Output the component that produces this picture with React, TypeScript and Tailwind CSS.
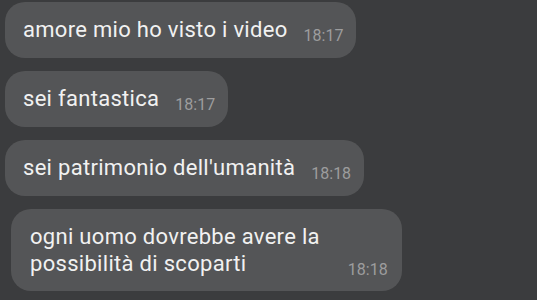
const messages = [
  { text: "amore mio ho visto i video", time: "18:17" },
  { text: "sei fantastica", time: "18:17" },
  { text: "sei patrimonio dell'umanità", time: "18:18" },
];

function Bubble({ text, time }: { text: string; time: string }) {
  return (
    <div className="ml-[5px] flex w-fit items-end rounded-[20px] bg-[#545557] pl-[18px] pr-[13px] pt-[14px] pb-[15px]">
      <p className="text-[22px] leading-[27px] tracking-[0.3px] text-[#f1f1f1]">{text}</p>
      <span className="ml-[16px] -mb-[3px] text-[16px] leading-[20px] text-[#9d9d9e]">{time}</span>
    </div>
  );
}

export default function App() {
  return (
    <div
      className="flex h-[300px] w-[537px] flex-col gap-[13px] overflow-hidden bg-[#3b3c3e] pt-[2px]"
      style={{ fontFamily: "Roboto, 'Liberation Sans', sans-serif" }}
    >
      {messages.map((m) => (
        <Bubble key={m.text} text={m.text} time={m.time} />
      ))}
      <div className="ml-[11px] flex w-fit items-end rounded-[20px] bg-[#545557] pl-[19px] pr-[14px] pt-[14px] pb-[14px]">
        <p className="text-[22px] leading-[27px] tracking-[0.3px] text-[#f1f1f1]">
          ogni uomo dovrebbe avere la
          <br />
          possibilità di scoparti
        </p>
        <span className="ml-[28px] -mb-[3px] text-[16px] leading-[20px] text-[#9d9d9e]">18:18</span>
      </div>
    </div>
  );
}
